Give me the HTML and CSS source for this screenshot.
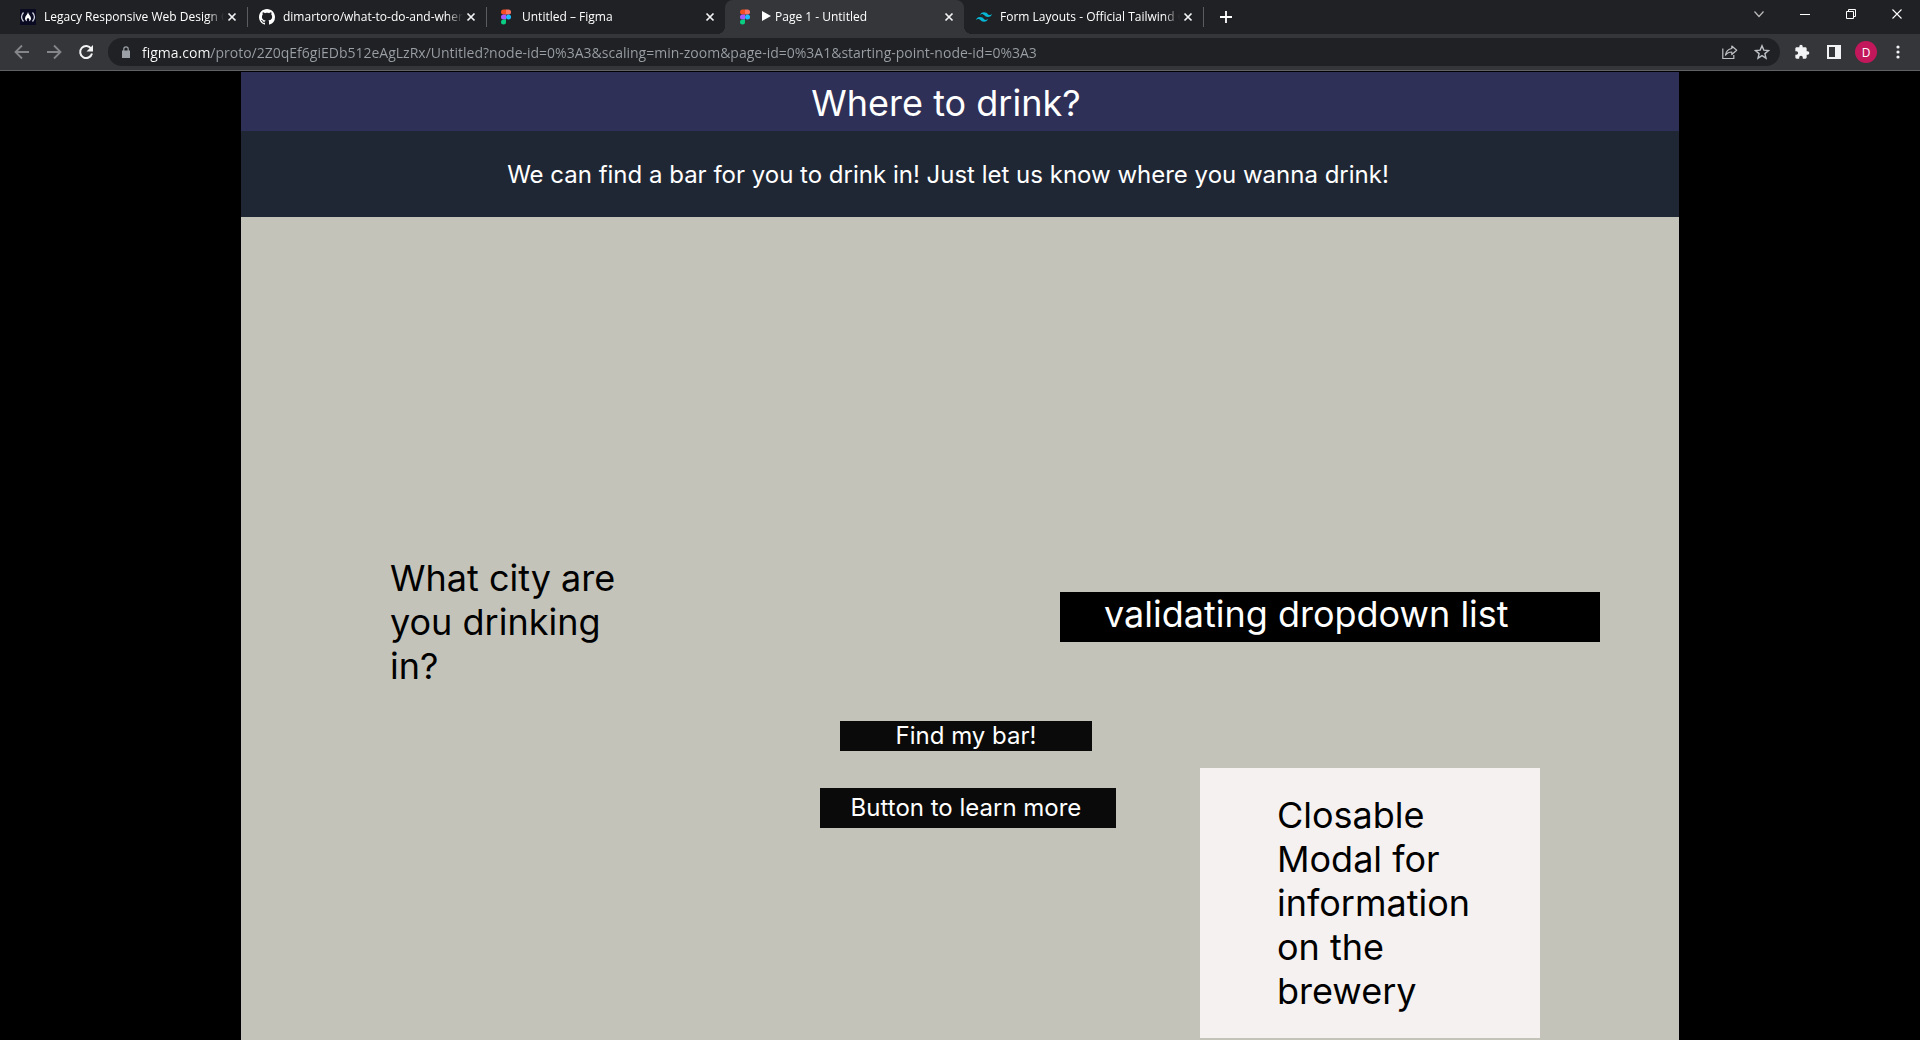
FILE: index.html
```html
<!DOCTYPE html>
<html lang="en">
<head>
<meta charset="utf-8">
<meta name="viewport" content="width=device-width, initial-scale=1">
<title>Page 1 - Untitled</title>
<link rel="stylesheet" href="styles.css">
</head>
<body>
<svg class="sprite" aria-hidden="true">
  <symbol id="close" viewBox="0 0 16 16"><path d="M4.5 4.5l7 7M11.5 4.5l-7 7" fill="none" stroke="currentColor" stroke-width="1.7"/></symbol>
  <symbol id="figma" viewBox="0 0 16 16">
    <path d="M8 .5H5.500a2.500 2.500 0 0 0 0 5H8z" fill="#f24e1e"/>
    <path d="M8 .5h2.500a2.500 2.500 0 0 1 0 5H8z" fill="#ff7262"/>
    <path d="M8 5.500H5.500a2.500 2.500 0 0 0 0 5H8z" fill="#a259ff"/>
    <circle cx="10.500" cy="8" r="2.500" fill="#1abcfe"/>
    <path d="M5.500 10.500H8V13a2.500 2.500 0 1 1-2.500-2.500z" fill="#0acf83"/>
  </symbol>
</svg>

<header class="browser">
  <div class="tabstrip">
    <nav class="tabs" aria-label="Tabs">
      <div class="tab">
        <svg class="icon" viewBox="0 0 16 16"><path fill="#0a0a23" d="M0 0h16v16H0z"/><path d="M3.500 3.500Q-.5 8 3.500 12.500M12.500 3.500q4 4.500 0 9" fill="none" stroke="#d0d0dc" stroke-width="1.300"/><path d="M8 3c.3 2.500 3 4 3 6.500 0 1.500-1 2.500-2 2.800.8-1.500.2-2.600-1-3.300-1.200.7-1.800 1.800-1 3.300-1-.3-2-1.300-2-2.800C5 7 7.700 5.500 8 3z" fill="#fff"/></svg>
        <a class="tab-title" href="#legacy">Legacy Responsive Web Design C</a>
        <button class="tab-close" aria-label="Close tab"><svg class="icon"><use href="#close"/></svg></button>
      </div>
      <div class="tab divided">
        <svg class="icon" viewBox="0 0 16 16"><path fill="#fff" d="M8 0C3.580 0 0 3.580 0 8c0 3.540 2.290 6.530 5.470 7.590.4.070.55-.17.55-.38 0-.19-.01-.82-.01-1.490-2.010.37-2.530-.49-2.690-.94-.09-.23-.48-.94-.82-1.130-.28-.15-.68-.52-.01-.53.63-.01 1.080.58 1.230.82.72 1.210 1.870.87 2.330.66.070-.52.28-.87.51-1.070-1.780-.2-3.640-.89-3.640-3.950 0-.87.31-1.590.82-2.150-.08-.2-.36-1.020.08-2.120 0 0 .67-.21 2.200.82.64-.18 1.320-.27 2-.27s1.360.09 2 .27c1.530-1.040 2.200-.82 2.200-.82.44 1.100.16 1.920.08 2.120.51.56.82 1.270.82 2.150 0 3.070-1.870 3.750-3.650 3.950.29.25.54.73.54 1.480 0 1.070-.01 1.930-.01 2.200 0 .21.15.46.55.38A8.010 8.010 0 0 0 16 8c0-4.420-3.580-8-8-8z"/></svg>
        <a class="tab-title" href="#dimartoro">dimartoro/what-to-do-and-wher</a>
        <button class="tab-close" aria-label="Close tab"><svg class="icon"><use href="#close"/></svg></button>
      </div>
      <div class="tab divided">
        <svg class="icon"><use href="#figma"/></svg>
        <a class="tab-title" href="#figma-file">Untitled – Figma</a>
        <button class="tab-close" aria-label="Close tab"><svg class="icon"><use href="#close"/></svg></button>
      </div>
      <div class="tab active">
        <svg class="icon"><use href="#figma"/></svg>
        <a class="tab-title" href="#page-1" aria-current="page"><svg class="play" viewBox="0 0 10 10" aria-hidden="true"><path d="M1 0l9 5-9 5z" fill="#fff"/></svg>Page 1 - Untitled</a>
        <button class="tab-close" aria-label="Close tab"><svg class="icon"><use href="#close"/></svg></button>
      </div>
      <div class="tab">
        <svg class="icon" viewBox="0 0 24 24"><path fill="#06b6d4" d="M12 4.800c-3.200 0-5.200 1.600-6 4.800 1.200-1.600 2.600-2.200 4.200-1.800.913.228 1.565.89 2.288 1.624C13.666 10.618 15.027 12 18 12c3.200 0 5.200-1.600 6-4.800-1.200 1.600-2.600 2.200-4.200 1.800-.913-.228-1.565-.89-2.288-1.624C16.337 6.182 14.976 4.800 12 4.800zM6 12c-3.200 0-5.200 1.600-6 4.800 1.200-1.600 2.600-2.200 4.200-1.800.913.228 1.565.89 2.288 1.624C7.666 17.818 9.027 19.200 12 19.200c3.200 0 5.200-1.600 6-4.800-1.200 1.600-2.600 2.200-4.200 1.800-.913-.228-1.565-.89-2.288-1.624C10.337 13.382 8.976 12 6 12z"/></svg>
        <a class="tab-title" href="#tailwind">Form Layouts - Official Tailwind C</a>
        <button class="tab-close" aria-label="Close tab"><svg class="icon"><use href="#close"/></svg></button>
      </div>
      <button class="new-tab" aria-label="New tab"><svg class="icon" viewBox="0 0 16 16"><path d="M8 2v12M2 8h12" stroke="#fff" stroke-width="1.800"/></svg></button>
    </nav>
    <div class="window-controls">
      <button aria-label="Search tabs"><svg class="icon" viewBox="0 0 16 16"><path d="M3.500 5.500L8 10.500l4.500-5" fill="none" stroke="#bbb" stroke-width="1.200"/></svg></button>
      <button aria-label="Minimize"><svg class="icon" viewBox="0 0 16 16"><path d="M3 8.500h10" stroke="#fff"/></svg></button>
      <button aria-label="Restore"><svg class="icon" viewBox="0 0 16 16"><path d="M3.500 5.500h7v7h-7zM5.500 5.500v-2h7v7h-2" fill="none" stroke="#fff"/></svg></button>
      <button aria-label="Close"><svg class="icon" viewBox="0 0 16 16"><path d="M3.500 3.500l9 9M12.500 3.500l-9 9" stroke="#fff" stroke-width="1.100"/></svg></button>
    </div>
  </div>

  <div class="toolbar">
    <div class="tools">
      <button class="tool dim" aria-label="Back"><svg class="icon" viewBox="0 0 16 16"><path d="M15 8H2M8 1.500L1.500 8 8 14.500" fill="none" stroke="currentColor" stroke-width="1.800"/></svg></button>
      <button class="tool dim" aria-label="Forward"><svg class="icon" viewBox="0 0 16 16"><path d="M1 8h13M8 1.500L14.500 8 8 14.500" fill="none" stroke="currentColor" stroke-width="1.800"/></svg></button>
      <button class="tool" aria-label="Reload"><svg class="icon" viewBox="0 0 16 16"><path d="M13.200 4.700A6 6 0 1 0 14 9.500" fill="none" stroke="currentColor" stroke-width="2"/><path d="M15 1v6.500H8.500z" fill="currentColor"/></svg></button>
    </div>
    <form class="omnibox">
      <svg class="lock" viewBox="0 0 8 12" aria-hidden="true"><path d="M0 4.500h8V12H0z" fill="#9aa0a6"/><path d="M1.800 5V3a2.200 2.200 0 0 1 4.400 0v2" fill="none" stroke="#9aa0a6" stroke-width="1.200"/></svg>
      <input class="url" type="text" aria-label="Address" value="figma.com/proto/2Z0qEf6giEDb512eAgLzRx/Untitled?node-id=0%3A3&amp;scaling=min-zoom&amp;page-id=0%3A1&amp;starting-point-node-id=0%3A3">
      <button class="tool pale" type="button" aria-label="Share"><svg class="icon" viewBox="0 0 16 16"><path d="M.8 4.500v10h11v-3.500" fill="none" stroke="currentColor" stroke-width="1.200"/><path d="M9.800 2l4.900 4.200-4.900 4.300V8C7 8 5 9 3.500 11.200 4 7.500 6 5 9.800 4.500z" fill="none" stroke="currentColor" stroke-width="1.200" stroke-linejoin="round"/></svg></button>
      <button class="tool pale" type="button" aria-label="Bookmark"><svg class="icon" viewBox="0 0 16 16"><path d="M8 1.800l1.800 4.300 4.700.4-3.600 3.100 1.100 4.600L8 11.700l-4 2.500 1.100-4.600L1.500 6.500l4.700-.4z" fill="none" stroke="currentColor" stroke-width="1.400"/></svg></button>
    </form>
    <div class="tools">
      <button class="tool" aria-label="Extensions"><svg class="icon" viewBox="0 0 24 24"><path fill="currentColor" d="M20.500 11H19V7c0-1.100-.9-2-2-2h-4V3.500a2.500 2.500 0 0 0-5 0V5H4c-1.100 0-2 .9-2 2v3.800h1.500a2.700 2.700 0 0 1 0 5.400H2V20c0 1.100.9 2 2 2h3.800v-1.500a2.700 2.700 0 0 1 5.400 0V22H17c1.100 0 2-.9 2-2v-4h1.500a2.500 2.500 0 0 0 0-5z"/></svg></button>
      <button class="tool" aria-label="Side panel"><svg class="icon" viewBox="0 0 16 16"><path fill="currentColor" fill-rule="evenodd" d="M1 1h14v14H1zM3 3v10h6V3z"/></svg></button>
      <button class="tool" aria-label="Profile"><span class="avatar">D</span></button>
      <button class="tool" aria-label="Menu"><svg class="icon" viewBox="0 0 16 16"><g fill="currentColor"><circle cx="8" cy="3" r="1.600"/><circle cx="8" cy="8" r="1.600"/><circle cx="8" cy="13" r="1.600"/></g></svg></button>
    </div>
  </div>
</header>

<main class="frame">
  <h1 class="title">Where to drink?</h1>
  <p class="intro">We can find a bar for you to drink in! Just let us know where you wanna drink!</p>
  <form class="finder">
    <div class="city">
      <label class="question" for="city">What city are you drinking in?</label>
      <select class="dropdown" id="city"><option>validating dropdown list</option></select>
    </div>
    <div class="results">
      <div class="actions">
        <button class="find" type="button">Find my bar!</button>
        <button class="learn" type="button">Button to learn more</button>
      </div>
      <section class="modal" aria-label="Brewery information">
        <p class="modal-text">Closable Modal for information on the brewery</p>
      </section>
    </div>
  </form>
</main>
</body>
</html>
```
FILE: styles.css
```css
* {
  box-sizing: border-box;
}

body {
  margin: 0;
  min-height: 100vh;
  display: flex;
  flex-direction: column;
  background: #000;
  font-family: Inter, "Liberation Sans", sans-serif;
}

button,
input,
select {
  margin: 0;
  padding: 0;
  border: 0;
  background: none;
  color: inherit;
  font: inherit;
}

h1,
p {
  margin: 0;
  font-weight: 400;
}

.sprite {
  display: none;
}

.icon {
  display: block;
  flex: none;
  width: 16px;
  height: 16px;
}

/* Browser window */

.browser {
  flex: none;
  margin-bottom: 1px;
  border-bottom: 1px solid #5f6164;
  background: #35363a;
  color: #f1f3f4;
  font-family: "Open Sans", "Noto Sans", sans-serif;
}

.tabstrip {
  display: flex;
  justify-content: space-between;
  height: 34px;
  padding-left: 8px;
  background: #202124;
}

.tabs {
  display: flex;
  flex: 1;
  min-width: 0;
}

.tab {
  position: relative;
  display: flex;
  flex: 0 1 239px;
  align-items: center;
  min-width: 0;
  padding: 0 7px 0 12px;
}

.tab.divided::before,
.new-tab::before {
  content: "";
  position: absolute;
  left: 0;
  top: 7px;
  width: 1px;
  height: 20px;
  background: #5a5c60;
}

.tab.active {
  border-radius: 8px 8px 0 0;
  background: #35363a;
}

.tab.active::before,
.tab.active::after {
  content: "";
  position: absolute;
  bottom: 0;
  width: 8px;
  height: 8px;
}

.tab.active::before {
  right: 100%;
  background: radial-gradient(circle at 0 0, #202124 8px, #35363a 8px);
}

.tab.active::after {
  left: 100%;
  background: radial-gradient(circle at 100% 0, #202124 8px, #35363a 8px);
}

.tab-title {
  flex: 1;
  min-width: 0;
  margin-left: 8px;
  overflow: hidden;
  color: #fff;
  font-size: 12px;
  line-height: 16px;
  text-decoration: none;
  white-space: nowrap;
  mask-image: linear-gradient(to left, transparent, #000 16px);
}

.play {
  width: 10px;
  height: 10px;
  margin-right: 4px;
}

.new-tab {
  position: relative;
  display: grid;
  place-items: center;
  width: 46px;
}

.window-controls {
  display: flex;
  height: 28px;
}

.window-controls button {
  display: grid;
  place-items: center;
  width: 46px;
}

.toolbar {
  display: flex;
  align-items: center;
  gap: 6px;
  padding: 4px 6px;
}

.tools {
  display: flex;
}

.tool {
  display: grid;
  flex: none;
  place-items: center;
  width: 32px;
  height: 28px;
}

.dim {
  color: #85868a;
}

.pale {
  color: #bdc1c6;
}

.omnibox {
  display: flex;
  flex: 1;
  align-items: center;
  min-width: 0;
  padding: 0 2px 0 14px;
  border-radius: 14px;
  background: #202124;
}

.lock {
  flex: none;
  width: 8px;
  height: 12px;
  margin-right: 12px;
}

/* The host name is white, the rest of the address is grey. */
.url {
  flex: 1;
  min-width: 0;
  height: 28px;
  background: linear-gradient(to right, #fff 69px, #9aa0a6 69px);
  background-clip: text;
  -webkit-background-clip: text;
  color: transparent;
  font-size: 14px;
}

.avatar {
  display: grid;
  place-items: center;
  width: 22px;
  height: 22px;
  border-radius: 50%;
  background: #c2185b;
  color: #fff;
  font-size: 12px;
}

/* Prototype frame */

.frame {
  flex: 1;
  width: 100%;
  max-width: 1438px;
  margin: 0 auto;
  background: #c4c3ba;
  color: #000;
}

.title {
  padding: 9px 44px 6px 16px;
  background: #2f3057;
  color: #fff;
  font-size: 36px;
  line-height: 44px;
  text-align: center;
}

.intro {
  padding: 29px 40px 27px 16px;
  background: #1f2735;
  color: #fff;
  font-size: 24px;
  line-height: 30px;
  text-align: center;
}

.finder {
  padding-top: 339px;
}

.city {
  display: flex;
  justify-content: space-between;
  align-items: flex-start;
  padding: 0 79px 0 149px;
}

.question {
  width: 240px;
  font-size: 36px;
  line-height: 44px;
}

.dropdown {
  appearance: none;
  width: 540px;
  height: 50px;
  margin-top: 36px;
  padding: 0 44px 6px;
  border-radius: 0;
  background: #000;
  color: #fff;
  font-size: 36px;
  line-height: 44px;
}

.results {
  display: flex;
  justify-content: flex-end;
  align-items: flex-start;
  gap: 84px;
  padding-right: 139px;
}

.actions {
  display: flex;
  flex-direction: column;
  align-items: center;
  gap: 37px;
  padding-top: 33px;
  color: #fff;
  font-size: 24px;
  line-height: 30px;
}

.find {
  width: 252px;
  height: 30px;
  margin-right: 4px;
  background: #0a0a0a;
}

.learn {
  width: 296px;
  height: 40px;
  padding-right: 4px;
  background: #0a0a0a;
}

.modal {
  width: 340px;
  margin-top: 80px;
  padding: 25px 60px 25px 77px;
  background: #f5f1f0;
}

.modal-text {
  font-size: 36px;
  line-height: 44px;
}
```
